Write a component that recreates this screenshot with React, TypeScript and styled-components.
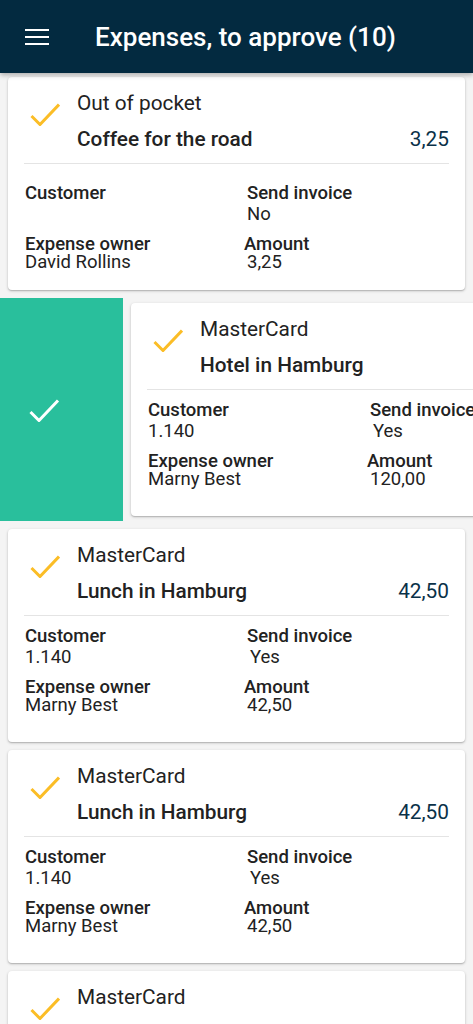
import React from 'react';
import styled, { createGlobalStyle } from 'styled-components';

type Expense = {
  kind: string;
  title: string;
  amount: string;
  customer: string;
  sendInvoice: string;
  owner: string;
};

const expenses: Expense[] = [
  { kind: 'Out of pocket', title: 'Coffee for the road', amount: '3,25', customer: '', sendInvoice: 'No', owner: 'David Rollins' },
  { kind: 'MasterCard', title: 'Hotel in Hamburg', amount: '120,00', customer: '1.140', sendInvoice: 'Yes', owner: 'Marny Best' },
  { kind: 'MasterCard', title: 'Lunch in Hamburg', amount: '42,50', customer: '1.140', sendInvoice: 'Yes', owner: 'Marny Best' },
  { kind: 'MasterCard', title: 'Lunch in Hamburg', amount: '42,50', customer: '1.140', sendInvoice: 'Yes', owner: 'Marny Best' },
  { kind: 'MasterCard', title: 'Dinner in Hamburg', amount: '38,00', customer: '1.140', sendInvoice: 'Yes', owner: 'Marny Best' },
];

const Check = ({ color, width = 30 }: { color: string; width?: number }) => (
  <svg width={width} height={24} viewBox="0 0 30 24" fill="none">
    <polyline points="1.5,14 10,22.5 29,2.5" stroke={color} strokeWidth="3" strokeLinejoin="miter" />
  </svg>
);

const ExpenseCard = ({ item, shift = 0 }: { item: Expense; shift?: number }) => (
  <Card $shift={shift}>
    <CardHead>
      <CheckBox>
        <Check color="#fbbd26" />
      </CheckBox>
      <HeadText>
        <Kind>{item.kind}</Kind>
        <TitleRow>
          <Title>{item.title}</Title>
          {item.title !== 'Hotel in Hamburg' && <Amount>{item.amount}</Amount>}
        </TitleRow>
      </HeadText>
    </CardHead>
    <Divider />
    <Details $shift={shift}>
      <Field>
        <Label>Customer</Label>
        <Value $top={3}>{item.customer}</Value>
      </Field>
      <Field>
        <Label>Send invoice</Label>
        <Value $top={3} $indent={item.sendInvoice === 'Yes' ? 3 : 0}>{item.sendInvoice}</Value>
      </Field>
      <Field>
        <Label>Expense owner</Label>
        <Value>{item.owner}</Value>
      </Field>
      <Field $pull={3}>
        <Label>Amount</Label>
        <Value $indent={3}>{item.amount}</Value>
      </Field>
    </Details>
  </Card>
);

export default function App() {
  const [first, swiped, ...rest] = expenses;
  return (
    <>
      <GlobalStyle />
      <TopBar>
        <svg width="24" height="16" viewBox="0 0 24 16">
          <rect x="0" y="0" width="24" height="2" fill="#fff" />
          <rect x="0" y="7" width="24" height="2" fill="#fff" />
          <rect x="0" y="14" width="24" height="2" fill="#fff" />
        </svg>
        <BarTitle>Expenses, to approve (10)</BarTitle>
      </TopBar>
      <List>
        <ExpenseCard item={first} shift={9} />
        <SwipeRow>
          <ApproveAction>
            <Check color="#ffffff" width={34} />
          </ApproveAction>
          <ExpenseCard item={swiped} />
        </SwipeRow>
        {rest.map((item, i) => (
          <ExpenseCard key={i} item={item} />
        ))}
      </List>
    </>
  );
}

const GlobalStyle = createGlobalStyle`
  body {
    margin: 0;
    background: #f4f4f4;
    font-family: Roboto, "Noto Sans", sans-serif;
    color: #212121;
    overflow: hidden;
  }
`;

const TopBar = styled.header`
  position: relative;
  z-index: 2;
  height: 73px;
  background: #032a40;
  display: flex;
  align-items: center;
  padding-left: 25px;
  box-shadow: 0 2px 5px rgba(0, 0, 0, 0.3);
`;

const BarTitle = styled.h1`
  margin: 0 0 0 46px;
  color: #ffffff;
  font-size: 26px;
  font-weight: 500;
`;

const List = styled.main`
  display: flex;
  flex-direction: column;
  gap: 8px;
  padding-top: 4px;
  width: 473px;
  overflow: hidden;
`;

const SwipeRow = styled.div`
  display: flex;
  align-items: center;
  height: 223px;
  & > section {
    flex-shrink: 0;
    width: 457px;
    margin: 0 0 0 8px;
  }
`;

const ApproveAction = styled.div`
  flex-shrink: 0;
  width: 123px;
  height: 100%;
  background: #29bf9c;
  display: flex;
  align-items: center;
  padding-left: 27px;
  box-sizing: border-box;
`;

const Card = styled.section<{ $shift: number }>`
  margin: 0 8px;
  background: #ffffff;
  border-radius: 4px;
  box-shadow: 0 1px 3px rgba(0, 0, 0, 0.22), 0 1px 1px rgba(0, 0, 0, 0.12);
  padding: 8px 16px ${(p) => 28 - p.$shift}px;
  box-sizing: border-box;
`;

const CardHead = styled.div`
  display: flex;
`;

const CheckBox = styled.div`
  margin: 17px 0 0 6px;
  width: 30px;
  height: 24px;
`;

const HeadText = styled.div`
  flex: 1;
  margin-left: 17px;
`;

const Kind = styled.div`
  font-size: 20.8px;
  line-height: 36px;
  color: #222;
`;

const TitleRow = styled.div`
  display: flex;
  justify-content: space-between;
  align-items: center;
  line-height: 36px;
`;

const Title = styled.div`
  font-size: 20.8px;
  font-weight: 500;
  color: #222;
`;

const Amount = styled.div`
  font-size: 20.8px;
  color: #0a3148;
`;

const Divider = styled.hr`
  margin: 6px 0 0;
  border: none;
  border-top: 1px solid #e4e4e4;
`;

const Details = styled.div<{ $shift: number }>`
  display: grid;
  grid-template-columns: 222px 1fr;
  row-gap: 12px;
  margin-top: ${(p) => 11 + p.$shift}px;
  padding-left: 1px;
  white-space: nowrap;
`;

const Field = styled.div<{ $pull?: number }>`
  display: flex;
  flex-direction: column;
  margin-left: ${(p) => -(p.$pull ?? 0)}px;
`;

const Label = styled.div`
  font-size: 18.5px;
  font-weight: 500;
  line-height: 18px;
  color: #222;
`;

const Value = styled.div<{ $top?: number; $indent?: number }>`
  font-size: 18.5px;
  line-height: 18px;
  min-height: 18px;
  color: #222;
  margin-top: ${(p) => p.$top ?? 0}px;
  padding-left: ${(p) => p.$indent ?? 0}px;
`;
